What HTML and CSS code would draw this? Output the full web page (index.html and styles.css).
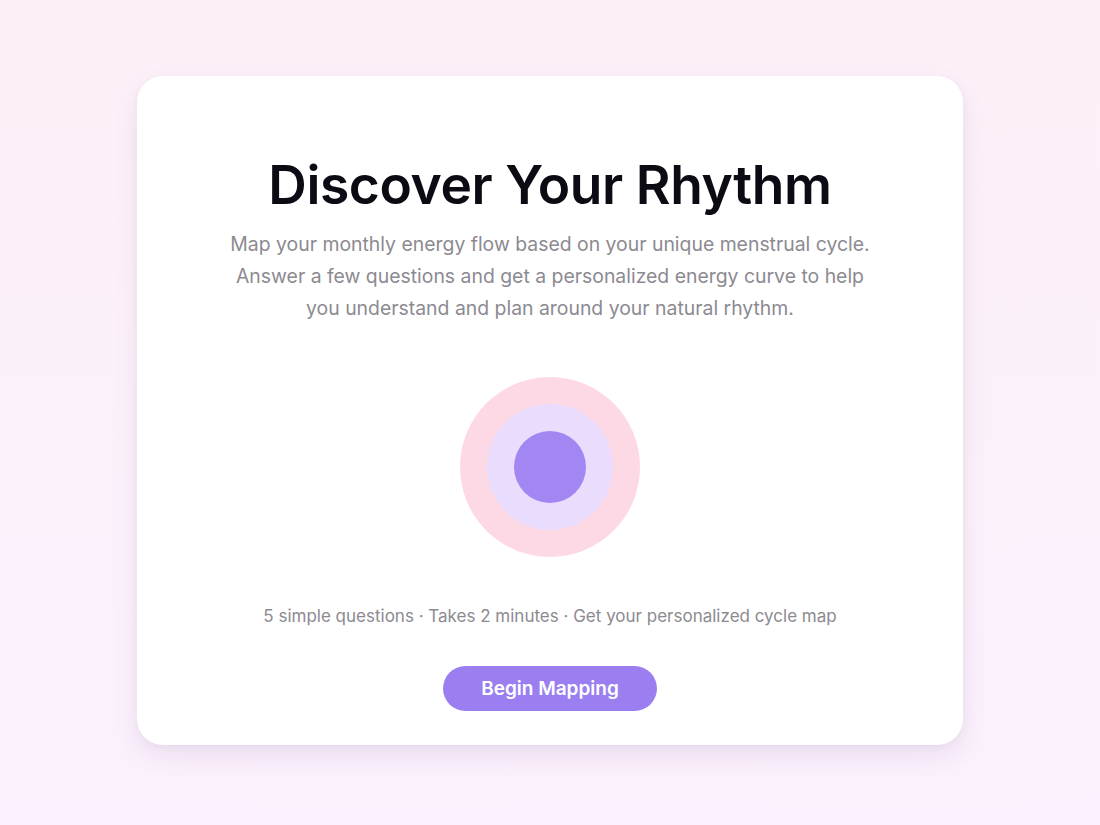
FILE: index.html
```html
<!DOCTYPE html>
<html lang="en">
<head>
<meta charset="utf-8">
<title>Discover Your Rhythm</title>
<link rel="stylesheet" href="styles.css">
</head>
<body>
<main class="page">
  <section class="card">
    <h1 class="title">Discover Your Rhythm</h1>
    <p class="lead">Map your monthly energy flow based on your unique menstrual cycle.<br>Answer a few questions and get a personalized energy curve to help<br>you understand and plan around your natural rhythm.</p>
    <div class="rings">
      <div class="ring-outer">
        <div class="ring-middle">
          <div class="ring-inner"></div>
        </div>
      </div>
    </div>
    <p class="meta">5 simple questions · Takes 2 minutes · Get your personalized cycle map</p>
    <button class="cta" type="button">Begin Mapping</button>
  </section>
</main>
</body>
</html>
```
FILE: styles.css
```css
* { box-sizing: border-box; }
html, body { margin: 0; padding: 0; }
body {
  min-height: 825px;
  background: linear-gradient(180deg, #fcf0f8 0%, #fbf1fb 60%, #fbf0fd 100%);
  font-family: Inter, "Noto Sans", "Liberation Sans", sans-serif;
}
.page {
  display: flex;
  justify-content: center;
  padding-top: 76px;
}
.card {
  width: 826px;
  height: 669px;
  background: #ffffff;
  border-radius: 26px;
  box-shadow: 0 10px 24px rgba(120, 90, 130, 0.12), 0 2px 6px rgba(120, 90, 130, 0.05);
  display: flex;
  flex-direction: column;
  align-items: center;
  padding-top: 77px;
}
.title {
  margin: 0;
  font-size: 53.3px;
  line-height: 64px;
  font-weight: 600;
  color: #0c0a12;
  letter-spacing: -0.4px;
}
.lead {
  margin: 11px 0 0;
  font-size: 19.4px;
  line-height: 32px;
  color: #8c8a91;
  text-align: center;
}
.rings {
  margin-top: 53px;
}
.ring-outer {
  width: 180px;
  height: 180px;
  border-radius: 50%;
  background: #fdd9e5;
  display: flex;
  align-items: center;
  justify-content: center;
}
.ring-middle {
  width: 126px;
  height: 126px;
  border-radius: 50%;
  background: #e9dcfd;
  display: flex;
  align-items: center;
  justify-content: center;
}
.ring-inner {
  width: 72px;
  height: 72px;
  border-radius: 50%;
  background: #a286f2;
}
.meta {
  margin: 47px 0 0;
  font-size: 17px;
  line-height: 24px;
  color: #8c8a91;
}
.cta {
  margin-top: 38px;
  width: 214px;
  height: 45px;
  border: none;
  border-radius: 23px;
  background: #9b7ff1;
  color: #ffffff;
  font-family: Inter, "Noto Sans", "Liberation Sans", sans-serif;
  font-size: 19px;
  font-weight: 600;
  cursor: pointer;
}
```
